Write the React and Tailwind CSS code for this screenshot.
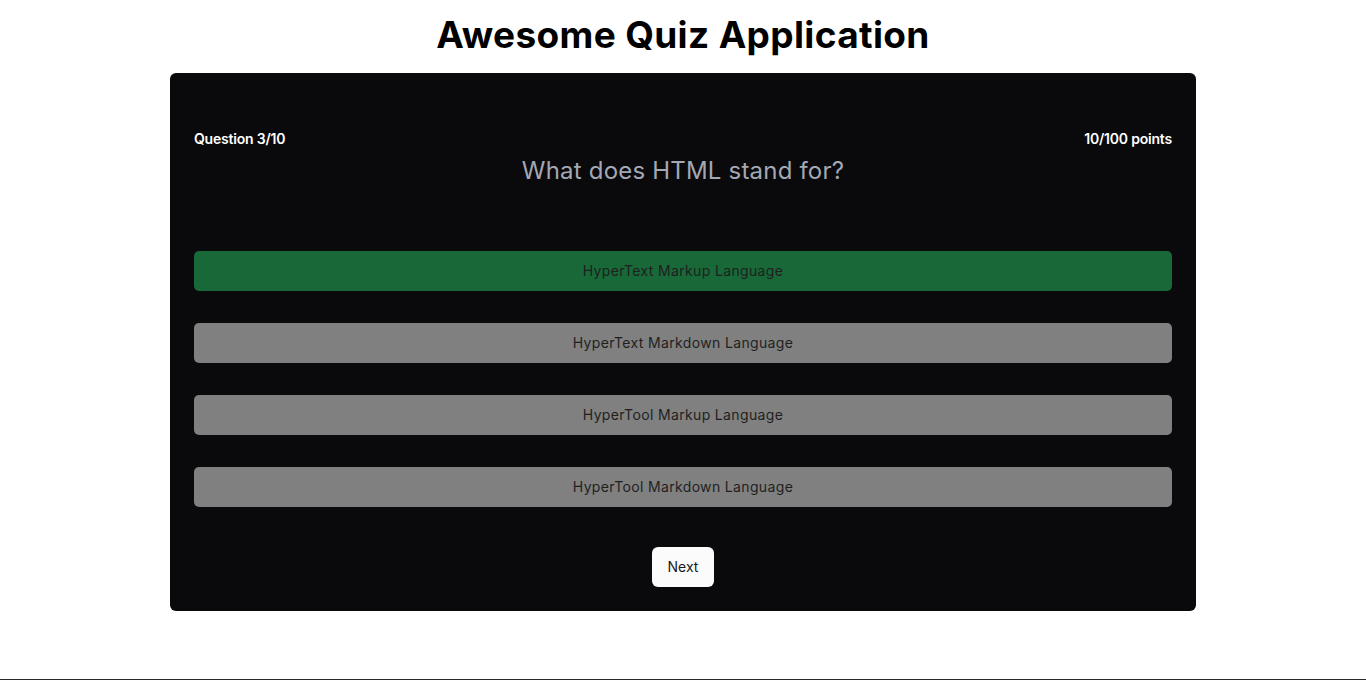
import React from "react";

const options = [
  { text: "HyperText Markup Language", correct: true },
  { text: "HyperText Markdown Language" },
  { text: "HyperTool Markup Language" },
  { text: "HyperTool Markdown Language" },
];

export default function App() {
  return (
    <div className="min-h-[680px] bg-white flex flex-col items-center font-['Inter',sans-serif]">
      {/* TITLE */}
      <h1 className="h-[73px] pt-[11px] text-[37px] leading-[48px] font-bold tracking-[0.35px] text-black">
        Awesome Quiz Application
      </h1>

      {/* CARD */}
      <div className="w-[1026px] bg-[#0a0a0c] rounded-md px-6 pt-[57px] pb-6">
        <div className="flex justify-between text-white text-sm font-semibold tracking-[-0.2px] leading-[18px]">
          <span>Question 3/10</span>
          <span>10/100 points</span>
        </div>
        <p className="mt-[9px] text-center text-[24px] leading-7 tracking-[0.2px] text-[#a3a8b4]">
          What does HTML stand for?
        </p>

        <div className="mt-[66px] flex flex-col gap-8">
          {options.map((o) => (
            <button
              key={o.text}
              className={`h-10 rounded-[5px] text-sm tracking-[0.35px] text-[#1f1f1f] ${
                o.correct ? "bg-[#186838]" : "bg-[#808080]"
              }`}
            >
              {o.text}
            </button>
          ))}
        </div>

        <div className="mt-10 flex justify-center">
          <button className="w-[62px] h-10 rounded-md bg-[#fbfbfb] text-sm text-[#1a1a1a]">
            Next
          </button>
        </div>
      </div>

      <div className="flex-1" />
      <div className="w-full h-px bg-[#2a2a2a]" />
    </div>
  );
}
